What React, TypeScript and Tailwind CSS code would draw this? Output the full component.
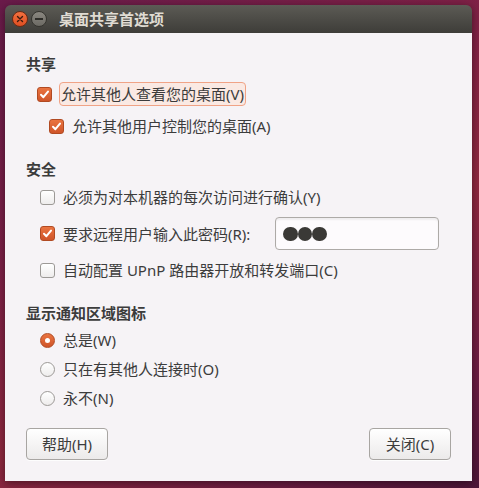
import React from 'react'

const font = { fontFamily: '"Noto Sans", "Noto Sans CJK SC", sans-serif' }

function Check({ checked }: { checked: boolean }) {
  if (!checked) {
    return (
      <span className="w-[15px] h-[15px] shrink-0 rounded-[3px] border border-[#9c9996] bg-gradient-to-b from-[#ffffff] to-[#eeecec] shadow-[inset_0_1px_0_#fff]" />
    )
  }
  return (
    <span className="w-[15px] h-[15px] shrink-0 rounded-[3px] border border-[#b14a22] bg-gradient-to-b from-[#ea7440] to-[#cf5429] flex items-center justify-center">
      <svg width="11" height="11" viewBox="0 0 11 11">
        <path d="M2 5.8 L4.4 8.2 L9 2.6" fill="none" stroke="#fff" strokeWidth="2" strokeLinecap="round" strokeLinejoin="round" />
      </svg>
    </span>
  )
}

function Radio({ checked }: { checked: boolean }) {
  if (!checked) {
    return <span className="w-[15px] h-[15px] shrink-0 rounded-full border border-[#9c9996] bg-gradient-to-b from-[#ffffff] to-[#eeecec]" />
  }
  return (
    <span className="w-[15px] h-[15px] shrink-0 rounded-full border border-[#b14a22] bg-gradient-to-b from-[#ea7440] to-[#cf5429] flex items-center justify-center">
      <span className="w-[5px] h-[5px] rounded-full bg-white" />
    </span>
  )
}

export default function App() {
  return (
    <div
      className="w-[479px] h-[488px] overflow-hidden pt-[5px] pl-[5px] bg-[linear-gradient(150deg,#6a1b4a_0%,#7d2046_35%,#8f283f_60%,#6a1c42_85%,#4d1638_100%)]"
      style={font}
    >
      <div className="w-[467px] rounded-t-[6px] shadow-[0_2px_8px_rgba(0,0,0,0.45)]">
        {/* title bar */}
        <div className="h-[28px] rounded-t-[6px] bg-gradient-to-b from-[#5c5b55] to-[#3e3d39] flex items-center pl-[7px]">
          <span className="w-[16px] h-[16px] rounded-full bg-gradient-to-b from-[#f2703f] to-[#de4f22] border border-[#6b2a14] flex items-center justify-center">
            <svg width="8" height="8" viewBox="0 0 8 8">
              <path d="M1.5 1.5 L6.5 6.5 M6.5 1.5 L1.5 6.5" stroke="#3b1a0e" strokeWidth="1.4" strokeLinecap="round" />
            </svg>
          </span>
          <span className="ml-[3px] w-[16px] h-[16px] rounded-full bg-gradient-to-b from-[#8a8780] to-[#6c6a64] border border-[#35342f] flex items-center justify-center">
            <span className="w-[8px] h-[1.5px] bg-[#2e2d29]" />
          </span>
          <span className="ml-[12px] text-[15px] font-bold text-[#dfdbd2] leading-[20px]">桌面共享首选项</span>
        </div>

        {/* body */}
        <div className="bg-[#f6f3f6] px-[21px] pt-[21px] pb-[21px] text-[15px] text-[#3c3c3c] leading-[20px]">
          <div className="h-[20px] font-bold">共享</div>

          <div className="mt-[8px] h-[24px] flex items-center pl-[11px]">
            <Check checked />
            <span className="ml-[7px] h-[24px] px-[1px] flex items-center rounded-[4px] border border-[#f0a386] bg-[#fae9e3]">
              允许其他人查看您的桌面(V)
            </span>
          </div>

          <div className="mt-[8px] h-[24px] flex items-center pl-[23px]">
            <Check checked />
            <span className="ml-[8px]">允许其他用户控制您的桌面(A)</span>
          </div>

          <div className="mt-[21px] h-[20px] font-bold">安全</div>

          <div className="mt-[6px] h-[24px] flex items-center pl-[14px]">
            <Check checked={false} />
            <span className="ml-[8px]">必须为对本机器的每次访问进行确认(Y)</span>
          </div>

          <div className="mt-[8px] h-[33px] flex items-center pl-[14px]">
            <Check checked />
            <span className="ml-[8px] w-[212px]">要求远程用户输入此密码(R):</span>
            <div className="w-[164px] h-[33px] rounded-[4px] border border-[#adaaa7] bg-[#fdfbfd] shadow-[inset_0_2px_2px_rgba(0,0,0,0.06)] flex items-center pl-[7px]">
              <span className="w-[14.5px] h-[14px] rounded-full bg-[#3a3936]" />
              <span className="w-[14.5px] h-[14px] rounded-full bg-[#3a3936]" />
              <span className="w-[14.5px] h-[14px] rounded-full bg-[#3a3936]" />
            </div>
          </div>

          <div className="mt-[8px] h-[24px] flex items-center pl-[14px]">
            <Check checked={false} />
            <span className="ml-[8px]">自动配置 UPnP 路由器开放和转发端口(C)</span>
          </div>

          <div className="mt-[21px] h-[20px] font-bold">显示通知区域图标</div>

          <div className="mt-[5px] h-[24px] flex items-center pl-[14px]">
            <Radio checked />
            <span className="ml-[8px]">总是(W)</span>
          </div>
          <div className="mt-[5px] h-[24px] flex items-center pl-[14px]">
            <Radio checked={false} />
            <span className="ml-[8px]">只在有其他人连接时(O)</span>
          </div>
          <div className="mt-[5px] h-[24px] flex items-center pl-[14px]">
            <Radio checked={false} />
            <span className="ml-[8px]">永不(N)</span>
          </div>

          <div className="mt-[18px] flex justify-between">
            <button className="w-[82px] h-[32px] rounded-[4px] border border-[#a8a5a2] bg-gradient-to-b from-[#ffffff] to-[#eceaea] text-[#3c3c3c] shadow-[0_1px_0_rgba(255,255,255,0.8)]">
              帮助(H)
            </button>
            <button className="w-[82px] h-[32px] rounded-[4px] border border-[#a8a5a2] bg-gradient-to-b from-[#ffffff] to-[#eceaea] text-[#3c3c3c] shadow-[0_1px_0_rgba(255,255,255,0.8)]">
              关闭(C)
            </button>
          </div>
        </div>
      </div>
    </div>
  )
}
